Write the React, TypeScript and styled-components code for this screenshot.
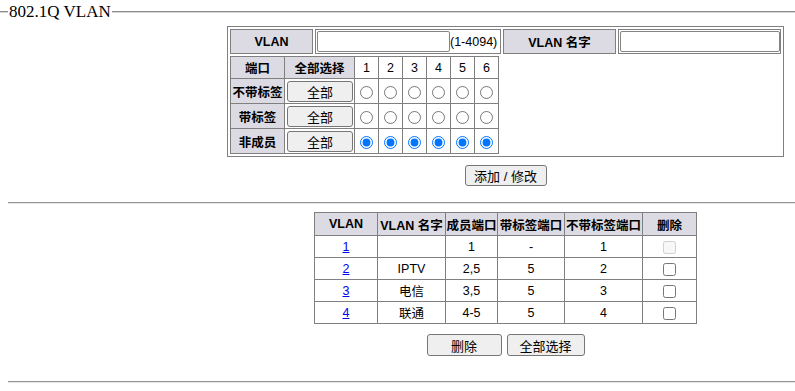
import React from "react";
import styled, { createGlobalStyle } from "styled-components";

const FONT = '"Liberation Sans", "Noto Sans CJK SC", sans-serif';
const LINE = "#808080";
const HEAD_BG = "#dcdbe4";
const TEXT_SIZE = "12.5px";

const GlobalStyle = createGlobalStyle`
  * { box-sizing: border-box; }
  body {
    margin: 0;
    background: #fff;
    color: #000;
    font-family: ${FONT};
    font-size: ${TEXT_SIZE};
  }
`;

const Page = styled.div`
  width: 795px;
`;

const LegendRow = styled.div`
  display: flex;
  align-items: center;
  height: 24px;
`;

const LegendLine = styled.div<{ $grow?: boolean }>`
  height: 2px;
  width: ${(p) => (p.$grow ? "auto" : "8px")};
  flex: ${(p) => (p.$grow ? 1 : "none")};
  border-top: 1px solid #8a8a8a;
  border-bottom: 1px solid #d8d8d8;
`;

const LegendText = styled.span`
  font-family: "Liberation Serif", serif;
  font-size: 17px;
  padding: 0 1px;
  line-height: 20px;
`;

const Content = styled.div`
  padding-left: 216px;
  display: flex;
  flex-direction: column;
  align-items: center;
`;

const FormTable = styled.table`
  margin-top: 2px;
  border: 1px solid ${LINE};
  border-spacing: 2px;
  border-collapse: separate;
`;

const FormHead = styled.th<{ $w: number }>`
  width: ${(p) => p.$w}px;
  height: 25px;
  padding: 0;
  border: 1px solid ${LINE};
  background: ${HEAD_BG};
  font-weight: bold;
  font-size: ${TEXT_SIZE};
`;

const FormField = styled.td<{ $w: number }>`
  width: ${(p) => p.$w}px;
  height: 25px;
  padding: 1px 0 1px 1px;
  border: 1px solid ${LINE};
  white-space: nowrap;
  vertical-align: middle;
`;

const TextBox = styled.input<{ $w: number }>`
  width: ${(p) => p.$w}px;
  height: 21px;
  margin: 0;
  border: 1px solid #858585;
  border-radius: 2px;
  vertical-align: middle;
  font-family: ${FONT};
`;

const Hint = styled.span`
  vertical-align: middle;
  font-size: ${TEXT_SIZE};
`;

const BareCell = styled.td`
  padding: 0;
  vertical-align: top;
`;

const PortTable = styled.table`
  border-collapse: collapse;
  border: 1px solid ${LINE};
  width: 269px;
`;

const PortHead = styled.th<{ $w: number; $plain?: boolean }>`
  width: ${(p) => p.$w}px;
  padding: 0;
  border: 1px solid ${LINE};
  background: ${(p) => (p.$plain ? "#fff" : HEAD_BG)};
  font-weight: ${(p) => (p.$plain ? "normal" : "bold")};
  font-size: ${TEXT_SIZE};
  white-space: nowrap;
`;

const PortRow = styled.tr<{ $h: number }>`
  height: ${(p) => p.$h}px;
`;

const PortCell = styled.td`
  padding: 0;
  border: 1px solid ${LINE};
  text-align: center;
  vertical-align: middle;
`;

const Radio = styled.input`
  width: 13px;
  height: 13px;
  margin: 2px 0 0 0;
  vertical-align: middle;
`;

const Button = styled.button<{ $w: number; $h?: number }>`
  width: ${(p) => p.$w}px;
  height: ${(p) => p.$h ?? 21}px;
  padding: 0;
  margin: 0;
  background: #efefef;
  border: 1px solid #767676;
  border-radius: 3px;
  font-family: ${FONT};
  font-size: 13px;
  color: #000;
`;

const AllButton = styled(Button)`
  margin: 1px 0 0 1px;
  vertical-align: middle;
`;

const ButtonBar = styled.div<{ $top: number }>`
  display: flex;
  gap: 5px;
  margin-top: ${(p) => p.$top}px;
`;

const Divider = styled.hr<{ $top: number }>`
  margin: ${(p) => p.$top}px 0 0 8px;
  height: 2px;
  border: none;
  border-top: 1px solid #959595;
  border-bottom: 1px solid #e6e6e6;
`;

const ListTable = styled.table`
  margin-top: 8px;
  border-collapse: collapse;
  border: 1px solid ${LINE};
`;

const ListHead = styled.th<{ $w: number }>`
  width: ${(p) => p.$w}px;
  height: 23px;
  padding: 0;
  border: 1px solid ${LINE};
  background: ${HEAD_BG};
  font-weight: bold;
  font-size: ${TEXT_SIZE};
  white-space: nowrap;
`;

const ListCell = styled.td`
  height: 22px;
  padding: 0;
  border: 1px solid ${LINE};
  text-align: center;
  vertical-align: middle;
  font-size: ${TEXT_SIZE};
`;

const VlanLink = styled.a`
  color: #0000ee;
  text-decoration: underline;
`;

const Check = styled.input`
  width: 13px;
  height: 13px;
  margin: 2px 0 0 0;
  vertical-align: middle;
`;

const ports = [1, 2, 3, 4, 5, 6];

const portRows = [
  { label: "不带标签", member: false },
  { label: "带标签", member: false },
  { label: "非成员", member: true },
];

const vlans = [
  { id: 1, name: "", members: "1", tagged: "-", untagged: "1", fixed: true },
  { id: 2, name: "IPTV", members: "2,5", tagged: "5", untagged: "2", fixed: false },
  { id: 3, name: "电信", members: "3,5", tagged: "5", untagged: "3", fixed: false },
  { id: 4, name: "联通", members: "4-5", tagged: "5", untagged: "4", fixed: false },
];

const PortMatrix: React.FC = () => (
  <PortTable>
    <tbody>
      <PortRow $h={22}>
        <PortHead $w={54}>端口</PortHead>
        <PortHead $w={70}>全部选择</PortHead>
        {ports.map((p) => (
          <PortHead key={p} $w={24} $plain>
            {p}
          </PortHead>
        ))}
      </PortRow>
      {portRows.map((row, r) => (
        <PortRow key={row.label} $h={25}>
          <PortHead $w={54}>{row.label}</PortHead>
          <PortCell>
            <AllButton $w={66} type="button">
              全部
            </AllButton>
          </PortCell>
          {ports.map((p) => (
            <PortCell key={p}>
              <Radio type="radio" name={`port${p}`} value={r} defaultChecked={row.member} />
            </PortCell>
          ))}
        </PortRow>
      ))}
    </tbody>
  </PortTable>
);

const App: React.FC = () => (
  <Page>
    <GlobalStyle />
    <LegendRow>
      <LegendLine />
      <LegendText>802.1Q VLAN</LegendText>
      <LegendLine $grow />
    </LegendRow>

    <Content>
      <FormTable>
        <tbody>
          <tr>
            <FormHead $w={83}>VLAN</FormHead>
            <FormField $w={186}>
              <TextBox $w={133} type="text" />
              <Hint>(1-4094)</Hint>
            </FormField>
            <FormHead $w={113}>VLAN 名字</FormHead>
            <FormField $w={163}>
              <TextBox $w={160} type="text" />
            </FormField>
          </tr>
          <tr>
            <BareCell colSpan={2}>
              <PortMatrix />
            </BareCell>
            <BareCell colSpan={2} />
          </tr>
        </tbody>
      </FormTable>
      <ButtonBar $top={8}>
        <Button $w={82} type="button">
          添加 / 修改
        </Button>
      </ButtonBar>
    </Content>

    <Divider $top={16} />

    <Content>
      <ListTable>
        <thead>
          <tr>
            <ListHead $w={63}>VLAN</ListHead>
            <ListHead $w={68}>VLAN 名字</ListHead>
            <ListHead $w={52}>成员端口</ListHead>
            <ListHead $w={67}>带标签端口</ListHead>
            <ListHead $w={78}>不带标签端口</ListHead>
            <ListHead $w={54}>删除</ListHead>
          </tr>
        </thead>
        <tbody>
          {vlans.map((v) => (
            <tr key={v.id}>
              <ListCell>
                <VlanLink href="#">{v.id}</VlanLink>
              </ListCell>
              <ListCell>{v.name}</ListCell>
              <ListCell>{v.members}</ListCell>
              <ListCell>{v.tagged}</ListCell>
              <ListCell>{v.untagged}</ListCell>
              <ListCell>
                <Check type="checkbox" disabled={v.fixed} />
              </ListCell>
            </tr>
          ))}
        </tbody>
      </ListTable>
      <ButtonBar $top={10}>
        <Button $w={75} $h={22} type="button">
          删除
        </Button>
        <Button $w={78} $h={22} type="button">
          全部选择
        </Button>
      </ButtonBar>
    </Content>

    <Divider $top={25} />
  </Page>
);

export default App;
